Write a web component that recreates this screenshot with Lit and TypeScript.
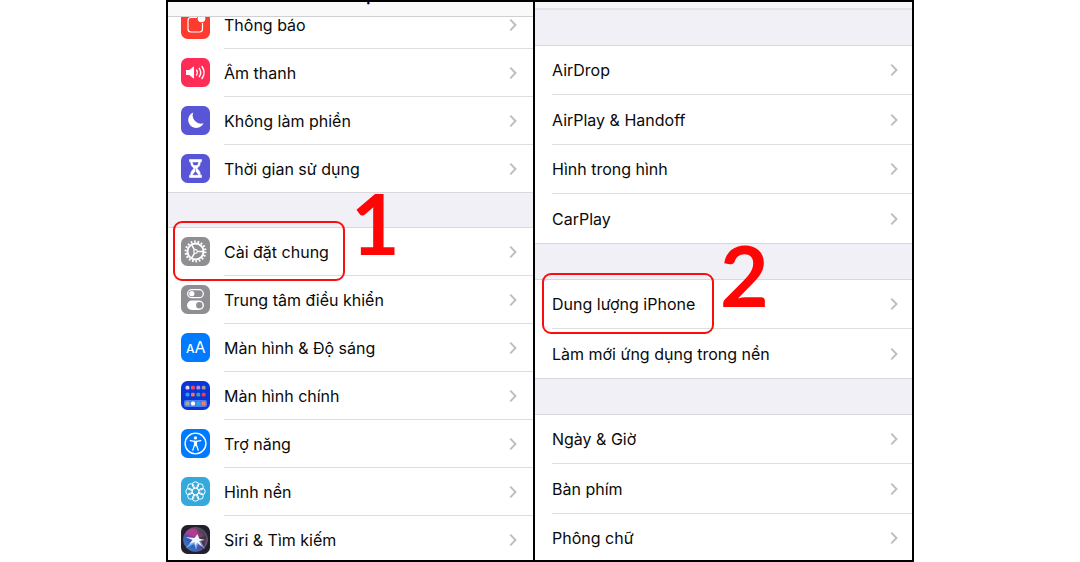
import { LitElement, html, svg, css, nothing } from "lit";
import type { SVGTemplateResult } from "lit";
import { customElement, property } from "lit/decorators.js";

interface Item {
  label: string;
  icon?: string;
  mark?: string;
}

const LEFT: Item[][] = [
  [
    { label: "Thông báo", icon: "bell" },
    { label: "Âm thanh", icon: "sound" },
    { label: "Không làm phiền", icon: "moon" },
    { label: "Thời gian sử dụng", icon: "hourglass" },
  ],
  [
    { label: "Cài đặt chung", icon: "gear", mark: "1" },
    { label: "Trung tâm điều khiển", icon: "toggles" },
    { label: "Màn hình & Độ sáng", icon: "display" },
    { label: "Màn hình chính", icon: "home" },
    { label: "Trợ năng", icon: "access" },
    { label: "Hình nền", icon: "wallpaper" },
    { label: "Siri & Tìm kiếm", icon: "siri" },
  ],
];

const RIGHT: Item[][] = [
  [
    { label: "AirDrop" },
    { label: "AirPlay & Handoff" },
    { label: "Hình trong hình" },
    { label: "CarPlay" },
  ],
  [
    { label: "Dung lượng iPhone", mark: "2" },
    { label: "Làm mới ứng dụng trong nền" },
  ],
  [{ label: "Ngày & Giờ" }, { label: "Bàn phím" }, { label: "Phông chữ" }],
];

const polar = (angle: number, r: number) => {
  const a = (angle * Math.PI) / 180;
  return { x: 14.5 + r * Math.cos(a), y: 14.5 + r * Math.sin(a) };
};

const HOME_DOTS = [
  ["#e8d8e0", "#ff4a5a", "#b48be0", "#a89a8a"],
  ["#2aa0e0", "#f0705a", "#35a8a0", "#f04040"],
];

const ICONS: Record<string, { bg: string; art: SVGTemplateResult }> = {
  bell: {
    bg: "#ff3b30",
    art: svg`
      <path d="M16 7.500H10a3 3 0 0 0-3 3V19a3 3 0 0 0 3 3h8.500a3 3 0 0 0 3-3v-6" fill="none" stroke="#fff" stroke-width="1.200"/>
      <circle cx="20.500" cy="8.500" r="3.800" fill="#fff"/>`,
  },
  sound: {
    bg: "#ff2d55",
    art: svg`
      <path d="M5 12h3.200L13 8.200v12.600L8.200 17H5z" fill="#fff"/>
      <path d="M15.600 12q1.600 2.500 0 5M18.300 10.300q2.800 4.200 0 8.400M21 8.500q4.200 6 0 12" fill="none" stroke="#fff" stroke-width="1.400" stroke-linecap="round"/>`,
  },
  moon: {
    bg: "#5856d6",
    art: svg`<path d="M12.200 6.500a8 8 0 1 0 10.300 10.700A8.300 8.300 0 0 1 12.200 6.500z" fill="#fff"/>`,
  },
  hourglass: {
    bg: "#5856d6",
    art: svg`
      <path d="M8.500 5.500h12v2.300h-1.200c0 3.600-1.200 4.800-3.300 6.700 2.100 1.900 3.300 3.100 3.300 6.700h1.200v2.300h-12v-2.300h1.200c0-3.600 1.200-4.800 3.300-6.700-2.100-1.900-3.300-3.100-3.300-6.700H8.500z" fill="#fff" stroke="#fff" stroke-width=".6" stroke-linejoin="round"/>
      <path d="M11.800 8.600h5.400l-1 2.300h-3.400zM14.500 14.500v3l2.600 3.200h-5.200l2.600-3.200" fill="#5856d6" stroke="#5856d6" stroke-width=".5"/>`,
  },
  gear: {
    bg: "#8e8e93",
    art: svg`
      <circle cx="14.500" cy="14.500" r="9.900" fill="none" stroke="#fff" stroke-width="2.200" stroke-dasharray="1.728 1.728"/>
      <circle cx="14.500" cy="14.500" r="8" fill="none" stroke="#fff" stroke-width="2"/>
      <circle cx="14.500" cy="14.500" r="1.800" fill="none" stroke="#fff" stroke-width="1.200"/>
      ${[0, 120, 240].map((a) => {
        const p = polar(a, 2);
        const q = polar(a, 8);
        return svg`<line x1=${p.x} y1=${p.y} x2=${q.x} y2=${q.y} stroke="#fff" stroke-width="1.500"/>`;
      })}`,
  },
  toggles: {
    bg: "#8e8e93",
    art: svg`
      <rect x="6.700" y="4.700" width="15.600" height="8" rx="4" fill="none" stroke="#fff" stroke-width="1.300"/>
      <circle cx="10.800" cy="8.700" r="2.600" fill="#fff"/>
      <rect x="6" y="15.500" width="17" height="9.400" rx="4.700" fill="#fff"/>
      <circle cx="18.300" cy="20.200" r="3.200" fill="#8e8e93"/>`,
  },
  display: {
    bg: "#007aff",
    art: svg`
      <text x="5" y="20" font-size="12" font-weight="500" fill="#fff">A</text>
      <text x="13.500" y="20" font-size="16" fill="#fff">A</text>`,
  },
  home: {
    bg: "#0a35d8",
    art: svg`
      ${HOME_DOTS.map((row, r) =>
        row.map(
          (c, i) =>
            svg`<rect x=${4.6 + i * 5.4} y=${4.8 + r * 7} width="3.800" height="3.800" rx="1.300" fill=${c}/>`
        )
      )}
      <rect x="3" y="19" width="23" height="7" rx="2" fill="#4a80e8"/>
      <rect x="4.500" y="20.500" width="4" height="4" rx="1.500" fill="#a8a8a8"/>
      <rect x="10" y="20.500" width="4" height="4" rx="1.500" fill="#fff"/>
      <rect x="15.300" y="20.500" width="4" height="4" rx="1.500" fill="#30a0e8"/>
      <rect x="20.600" y="20.500" width="4" height="4" rx="1.500" fill="#ff7868"/>`,
  },
  access: {
    bg: "#007aff",
    art: svg`
      <circle cx="14.500" cy="14.500" r="10.400" fill="none" stroke="#fff" stroke-width="1.400"/>
      <circle cx="14.500" cy="8.900" r="1.600" fill="#fff"/>
      <path d="M9.200 11.600l4.300 .7v3.700l-1.700 5.300M19.800 11.600l-4.300 .7v3.700l1.700 5.300" fill="none" stroke="#fff" stroke-width="1.200" stroke-linecap="round" stroke-linejoin="round"/>
      <path d="M13 11.800h3v4.600l-.5 .8h-2l-.5-.8z" fill="#fff"/>`,
  },
  wallpaper: {
    bg: "#34aadc",
    art: svg`
      <circle cx="14.500" cy="14.500" r="3.400" fill="none" stroke="#fff" stroke-width="1"/>
      ${[0, 45, 90, 135, 180, 225, 270, 315].map((a) => {
        const p = polar(a, 6.5);
        return svg`<circle cx=${p.x} cy=${p.y} r="3.200" fill="none" stroke="#fff" stroke-width="1"/>`;
      })}`,
  },
  siri: {
    bg: "#22202e",
    art: svg`
      <defs>
        <linearGradient id="orb" x1="0" y1="1" x2="1" y2="0">
          <stop offset="0" stop-color="#1e9ce0"/>
          <stop offset=".35" stop-color="#3a55b8"/>
          <stop offset=".6" stop-color="#9a3a90"/>
          <stop offset=".8" stop-color="#4a4450"/>
          <stop offset="1" stop-color="#3a3a42"/>
        </linearGradient>
      </defs>
      <circle cx="14.500" cy="14.500" r="12" fill="url(#orb)" stroke="#6a6a78" stroke-width=".7"/>
      <path d="M4 9q5-7 12-5l1 8-5-1z" fill="#c03890" opacity=".75"/>
      <path d="M15 13l10-2-1 9-3 4z" fill="#33363f" opacity=".8"/>
      <path d="M5 23l8-10 4-2 2 4 5 9-7-5-2 6-2-6z" fill="#8fd0f5" opacity=".7"/>
      <path d="M4.500 12l9 1 3-4 1.500 4.500 6 1.500-6 1 3 5.500-5-4-1.500 3.500-1-4-5 2 3-4z" fill="#fff" opacity=".9"/>`,
  },
};

@customElement("settings-row")
class SettingsRow extends LitElement {
  @property({ attribute: false }) item!: Item;

  static styles = css`
    :host {
      display: block;
      position: relative;
    }
    .row {
      display: flex;
      height: 100%;
      color: #0a0a0a;
      text-decoration: none;
    }
    .icon {
      align-self: center;
      flex: none;
      width: 29px;
      height: 29px;
      margin: 0 0 1px 13px;
      font-family: Inter, sans-serif;
    }
    .body {
      flex: 1;
      display: flex;
      align-items: center;
      justify-content: space-between;
      margin-left: var(--inset, 14px);
      padding-right: var(--end, 16px);
      border-bottom: 1px solid #dededf;
    }
    :host([last]) .row {
      box-shadow: inset 0 -1px #d8d8dc;
    }
    :host([last]) .body {
      border-color: transparent;
    }
    .chevron {
      width: 8px;
      height: 14px;
    }
    .mark {
      position: absolute;
      top: -7px;
      left: var(--mark-left, 5px);
      box-sizing: border-box;
      width: 172px;
      height: calc(100% + 12px);
      border: 2px solid #fb0d0d;
      border-radius: 9px;
      pointer-events: none;
      z-index: 1;
    }
    .digit {
      position: absolute;
      left: 100%;
      top: -42px;
      margin-left: 8px;
      color: #ff0505;
      font: 700 84px/84px Lato, sans-serif;
    }
  `;

  render() {
    const { label, icon, mark } = this.item;
    const art = icon ? ICONS[icon] : undefined;
    return html`
      <a class="row" href="#">
        ${art
          ? html`<svg class="icon" viewBox="0 0 29 29" aria-hidden="true">
              <rect width="29" height="29" rx="6.500" fill=${art.bg} />
              ${art.art}
            </svg>`
          : nothing}
        <span class="body">
          <span>${label}</span>
          <svg class="chevron" viewBox="0 0 8 14" aria-hidden="true">
            <path d="M1.300 1.700L6.500 7l-5.200 5.300" fill="none" stroke="#bdbdc0" stroke-width="1.900" />
          </svg>
        </span>
      </a>
      ${mark ? html`<div class="mark"><span class="digit">${mark}</span></div>` : nothing}
    `;
  }
}

@customElement("app-root")
class AppRoot extends LitElement {
  static styles = css`
    :host {
      display: block;
      background: #fff;
      font: 16px/20px Inter, "Noto Sans", sans-serif;
    }
    .frame {
      box-sizing: border-box;
      display: grid;
      grid-template-columns: 365fr 379fr;
      max-width: 748px;
      height: 100vh;
      margin: 0 auto;
      border: 2px solid #000;
      overflow: hidden;
    }
    .panel {
      min-width: 0;
      min-height: 0;
      overflow: hidden;
    }
    .general {
      border-left: 2px solid #000;
      --inset: 17px;
      --end: 14px;
      --mark-left: 7px;
    }
    .bar {
      position: relative;
      z-index: 1;
      box-sizing: border-box;
      display: flex;
      justify-content: center;
      align-items: flex-end;
      height: 15px;
      overflow: hidden;
      background: #f9f9fa;
      border-bottom: 1px solid #d0d0d3;
    }
    .title {
      margin: 0;
      padding-bottom: 11px;
      font-size: 17px;
      line-height: 20px;
      font-weight: 600;
    }
    .bar.slim {
      height: 8px;
      background: #f6f6f6;
      border-bottom: 2px solid #e4e4e6;
    }
    .list {
      background: #f1f0f6;
    }
    .scrolled {
      margin-top: -16px;
    }
    .group {
      background: #fff;
    }
    .group + .group,
    .spaced .group {
      border-top: 1px solid #d8d8dc;
    }
    .root .group + .group {
      margin-top: 34px;
    }
    .general .group {
      margin-top: 35px;
    }
    .root settings-row {
      height: 48px;
    }
    .general settings-row {
      height: 49px;
    }
    .general settings-row:nth-child(even) {
      height: 50px;
    }
    .spaced {
      display: flow-root;
    }
  `;

  private groups(groups: Item[][]) {
    return groups.map(
      (g) => html`<div class="group">
        ${g.map(
          (item, i) =>
            html`<settings-row .item=${item} ?last=${i === g.length - 1}></settings-row>`
        )}
      </div>`
    );
  }

  render() {
    return html`
      <main class="frame">
        <section class="panel root">
          <header class="bar"><h1 class="title">Cài đặt</h1></header>
          <nav class="list scrolled">${this.groups(LEFT)}</nav>
        </section>
        <section class="panel general">
          <header class="bar slim"></header>
          <nav class="list spaced">${this.groups(RIGHT)}</nav>
        </section>
      </main>
    `;
  }
}
